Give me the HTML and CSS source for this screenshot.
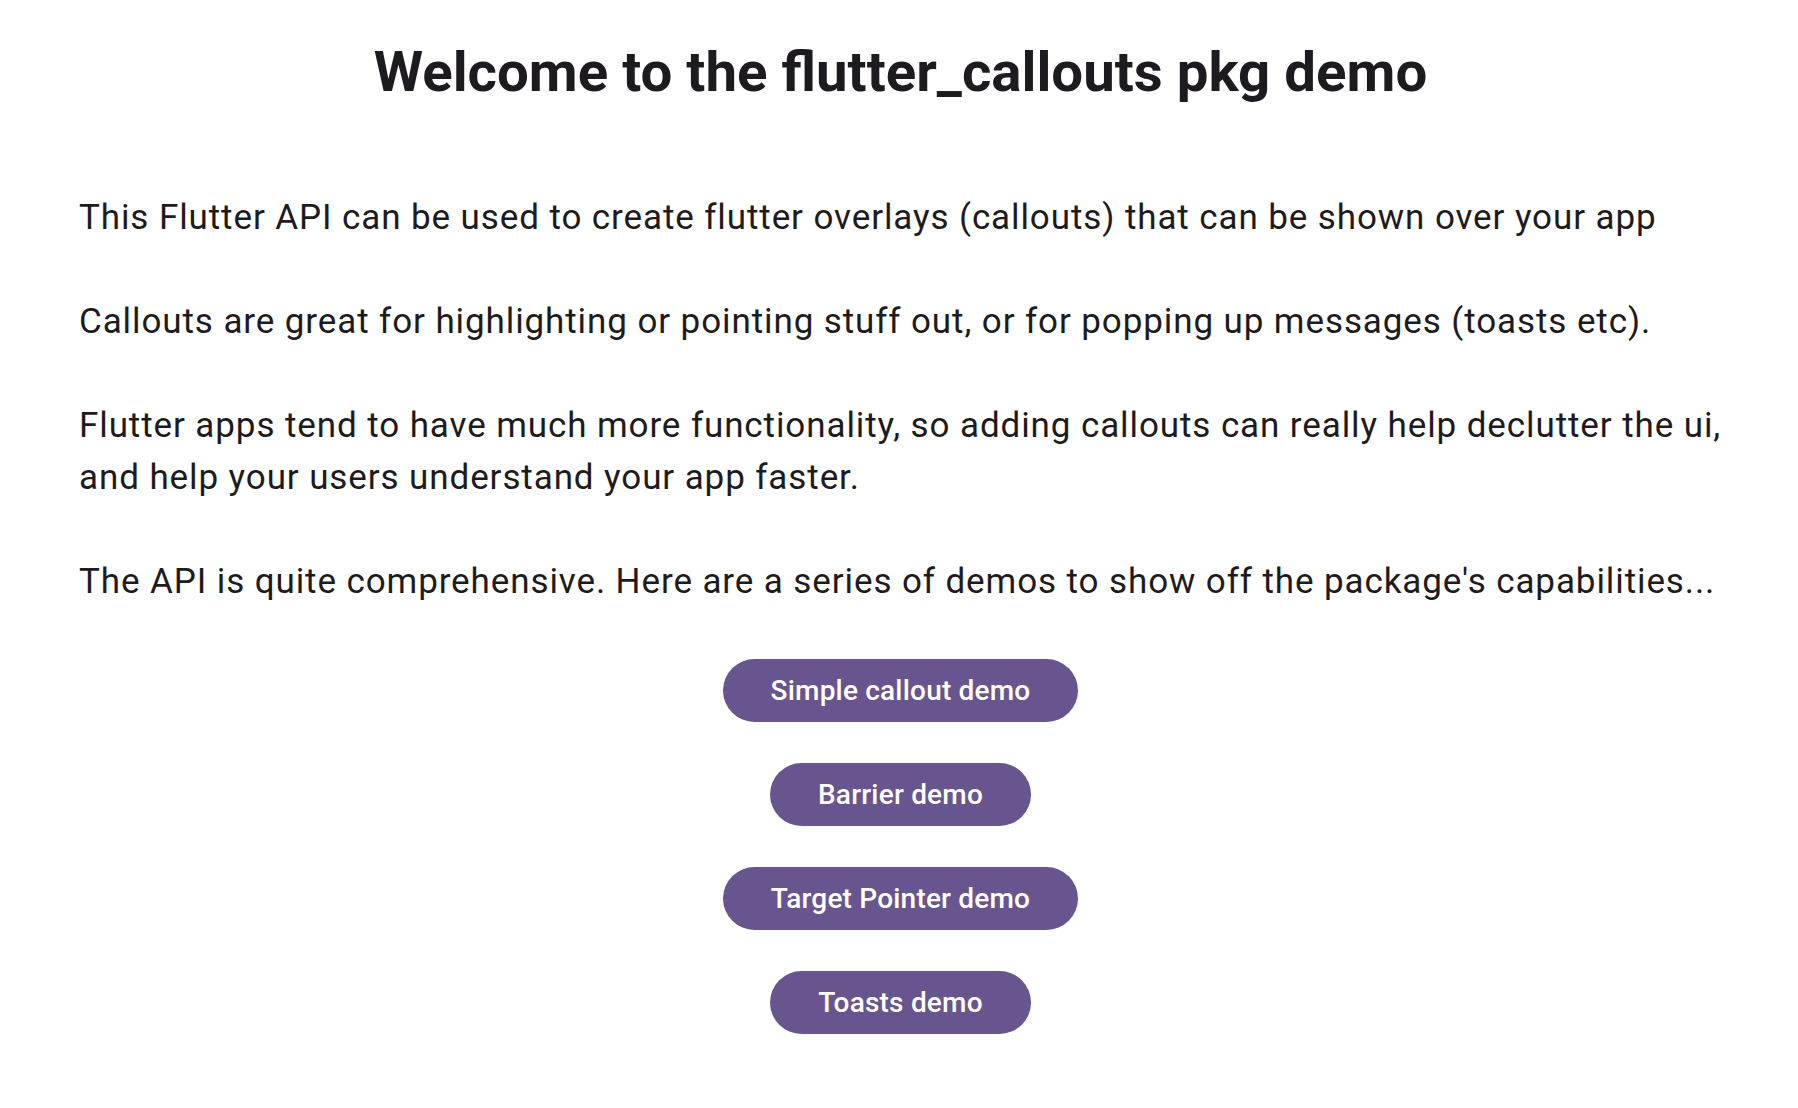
FILE: index.html
```html
<!DOCTYPE html>
<html lang="en">
<head>
<meta charset="utf-8">
<title>flutter_callouts demo</title>
<link rel="stylesheet" href="styles.css">
</head>
<body>
<main class="page">
  <h1 class="title">Welcome to the flutter_callouts pkg demo</h1>
  <section class="intro">
    <p>This Flutter API can be used to create flutter overlays (callouts) that can be shown over your app</p>
    <p>Callouts are great for highlighting or pointing stuff out, or for popping up messages (toasts etc).</p>
    <p>Flutter apps tend to have much more functionality, so adding callouts can really help declutter the ui, and help your users understand your app faster.</p>
    <p>The API is quite comprehensive. Here are a series of demos to show off the package's capabilities...</p>
  </section>
  <nav class="demos">
    <button class="demo-btn">Simple callout demo</button>
    <button class="demo-btn">Barrier demo</button>
    <button class="demo-btn">Target Pointer demo</button>
    <button class="demo-btn">Toasts demo</button>
  </nav>
</main>
</body>
</html>
```
FILE: styles.css
```css
html, body {
  margin: 0;
  padding: 0;
  background: #ffffff;
}
body {
  font-family: Roboto, "Noto Sans", sans-serif;
  color: #1d1b20;
}
.page {
  display: flex;
  flex-direction: column;
  align-items: center;
  padding-top: 34px;
  padding-left: 3px;
}
.title {
  margin: 0;
  font-size: 56.4px;
  font-weight: 700;
  line-height: 76px;
  text-align: center;
}
.intro {
  align-self: stretch;
  padding: 0 40px 0 76px;
  margin-top: 82px;
}
.intro p {
  margin: 0 0 52px 0;
  font-size: 35px;
  line-height: 52px;
  letter-spacing: 0.9px;
}
.intro p:last-child {
  margin-bottom: 0;
}
.demos {
  margin-top: 51px;
  display: flex;
  flex-direction: column;
  align-items: center;
  gap: 41px;
}
.demo-btn {
  height: 63px;
  padding: 0 48px;
  border: none;
  border-radius: 32px;
  background: #68548e;
  color: #ffffff;
  font-family: Roboto, "Noto Sans", sans-serif;
  font-size: 28px;
  font-weight: 500;
  letter-spacing: 0.2px;
}
```
